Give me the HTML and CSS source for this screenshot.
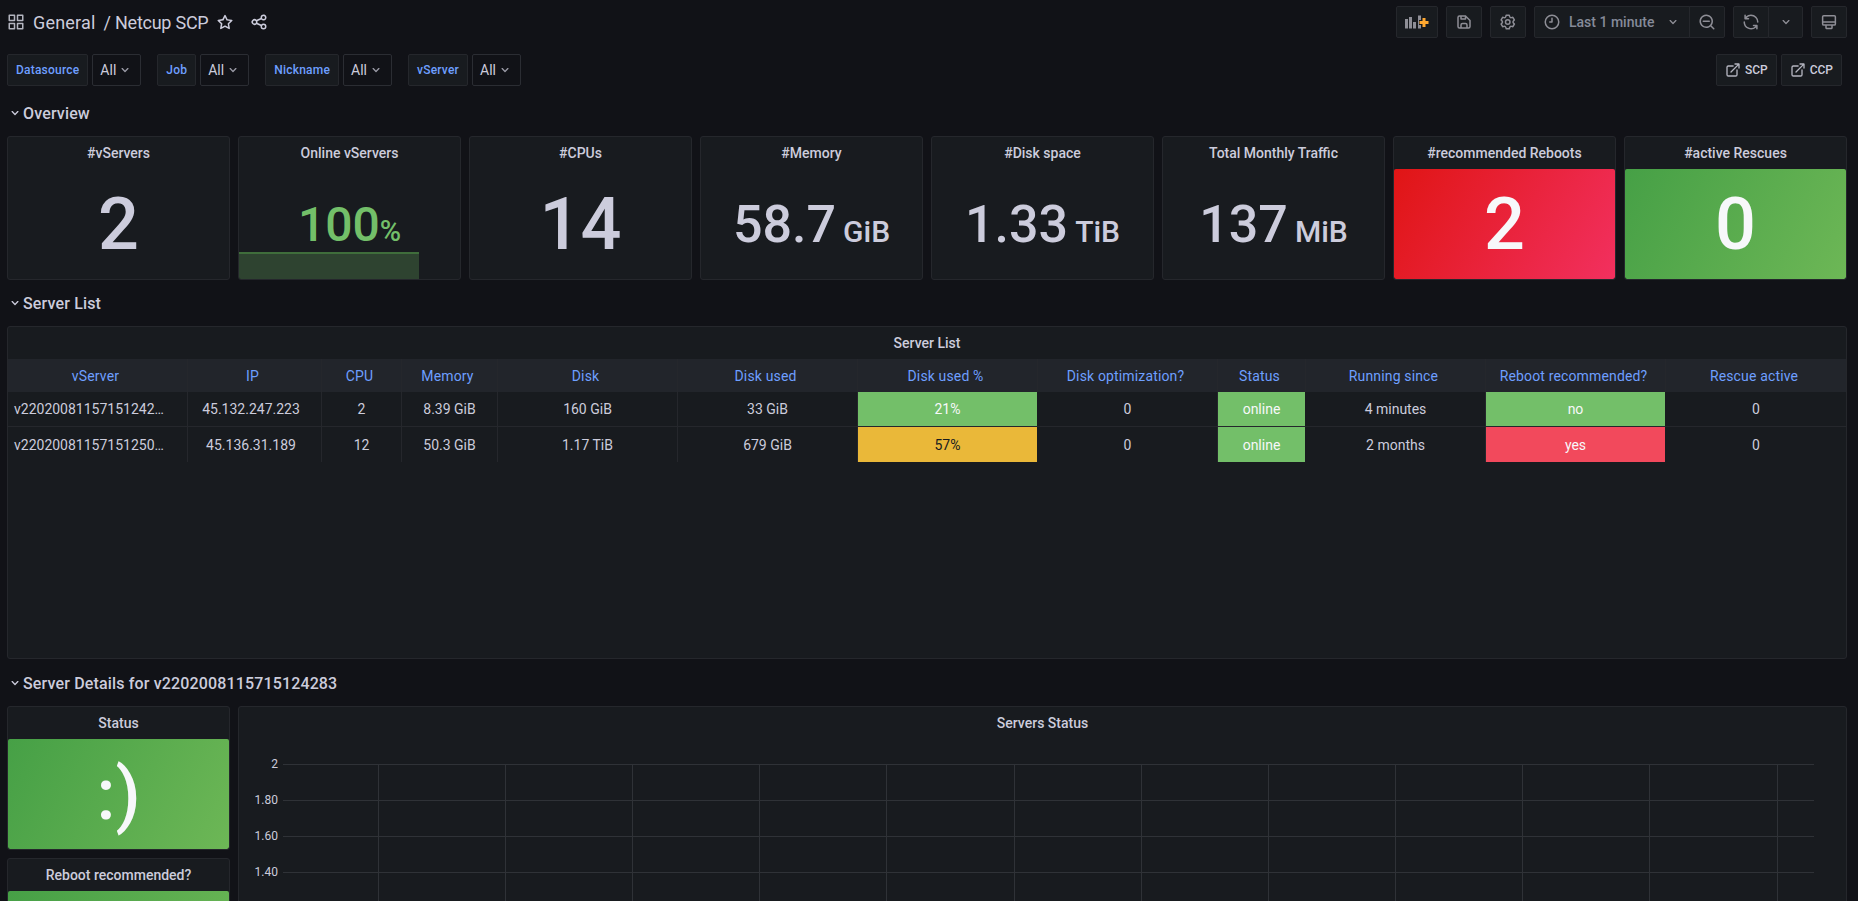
FILE: index.html
```html
<!DOCTYPE html>
<html lang="en">
<head>
<meta charset="utf-8">
<title>General / Netcup SCP</title>
<link rel="stylesheet" href="styles.css">
</head>
<body>
<svg class="defs" aria-hidden="true">
  <symbol id="i-apps" viewBox="0 0 24 24"><path d="M10,13H3a1,1,0,0,0-1,1v7a1,1,0,0,0,1,1h7a1,1,0,0,0,1-1V14A1,1,0,0,0,10,13ZM9,20H4V15H9ZM21,2H14a1,1,0,0,0-1,1v7a1,1,0,0,0,1,1h7a1,1,0,0,0,1-1V3A1,1,0,0,0,21,2ZM20,9H15V4h5Zm1,4H14a1,1,0,0,0-1,1v7a1,1,0,0,0,1,1h7a1,1,0,0,0,1-1V14A1,1,0,0,0,21,13Zm-1,7H15V15h5ZM10,2H3A1,1,0,0,0,2,3v7a1,1,0,0,0,1,1h7a1,1,0,0,0,1-1V3A1,1,0,0,0,10,2ZM9,9H4V4H9Z"/></symbol>
  <symbol id="i-star" viewBox="0 0 24 24"><path d="M22,9.67A1,1,0,0,0,21.14,9l-5.69-.83L12.9,3a1,1,0,0,0-1.8,0L8.55,8.16,2.86,9a1,1,0,0,0-.81.68,1,1,0,0,0,.25,1l4.13,4-1,5.68A1,1,0,0,0,6.9,21.44L12,18.77l5.1,2.67a.93.93,0,0,0,.46.12,1,1,0,0,0,.59-.19,1,1,0,0,0,.4-1l-1-5.68,4.13-4A1,1,0,0,0,22,9.67Zm-6.15,4a1,1,0,0,0-.29.88l.72,4.2-3.76-2a1.06,1.06,0,0,0-.94,0l-3.76,2,.72-4.2a1,1,0,0,0-.29-.88l-3-3,4.21-.61a1,1,0,0,0,.76-.55L12,5.7l1.88,3.82a1,1,0,0,0,.76.55l4.21.61Z"/></symbol>
  <symbol id="i-share" viewBox="0 0 24 24"><path d="M18,14a4,4,0,0,0-3.08,1.48l-5.1-2.35a3.64,3.64,0,0,0,0-2.26l5.1-2.35A4,4,0,1,0,14,6a4.17,4.17,0,0,0,.07.71L8.79,9.14a4,4,0,1,0,0,5.72l5.28,2.43A4.17,4.17,0,0,0,14,18a4,4,0,1,0,4-4ZM18,4a2,2,0,1,1-2,2A2,2,0,0,1,18,4ZM6,14a2,2,0,1,1,2-2A2,2,0,0,1,6,14Zm12,6a2,2,0,1,1,2-2A2,2,0,0,1,18,20Z"/></symbol>
  <symbol id="i-down" viewBox="0 0 24 24"><path d="M17,9.17a1,1,0,0,0-1.41,0L12,12.71,8.46,9.17a1,1,0,0,0-1.41,0,1,1,0,0,0,0,1.42l4.24,4.24a1,1,0,0,0,1.42,0L17,10.59A1,1,0,0,0,17,9.17Z"/></symbol>
  <symbol id="i-save" viewBox="0 0 24 24"><path d="M20.71,9.29l-6-6a1,1,0,0,0-.32-.21A1.09,1.09,0,0,0,14,3H6A3,3,0,0,0,3,6V18a3,3,0,0,0,3,3H18a3,3,0,0,0,3-3V10A1,1,0,0,0,20.71,9.29ZM9,5h4V7H9Zm6,14H9V16a1,1,0,0,1,1-1h4a1,1,0,0,1,1,1Zm4-1a1,1,0,0,1-1,1H17V16a3,3,0,0,0-3-3H10a3,3,0,0,0-3,3v3H6a1,1,0,0,1-1-1V6A1,1,0,0,1,6,5H7V8A1,1,0,0,0,8,9h6a1,1,0,0,0,1-1V6.41l4,4Z"/></symbol>
  <symbol id="i-cog" viewBox="0 0 24 24"><path d="M19.9,12.66a1,1,0,0,1,0-1.32L21.18,9.9a1,1,0,0,0,.12-1.17l-2-3.46a1,1,0,0,0-1.07-.48l-1.88.38a1,1,0,0,1-1.15-.66l-.61-1.83A1,1,0,0,0,13.64,2h-4a1,1,0,0,0-1,.68L8.08,4.51a1,1,0,0,1-1.15.66L5,4.79A1,1,0,0,0,4,5.27L2,8.73A1,1,0,0,0,2.1,9.9l1.27,1.44a1,1,0,0,1,0,1.32L2.1,14.1A1,1,0,0,0,2,15.27l2,3.46a1,1,0,0,0,1.07.48l1.88-.38a1,1,0,0,1,1.15.66l.61,1.83a1,1,0,0,0,1,.68h4a1,1,0,0,0,.95-.68l.61-1.83a1,1,0,0,1,1.15-.66l1.88.38a1,1,0,0,0,1.07-.48l2-3.46a1,1,0,0,0-.12-1.17ZM18.41,14l.8.9-1.28,2.22-1.18-.24a3,3,0,0,0-3.45,2L12.92,20H10.36L10,18.86a3,3,0,0,0-3.45-2l-1.18.24L4.07,14.89l.8-.9a3,3,0,0,0,0-4l-.8-.9L5.35,6.89l1.18.24a3,3,0,0,0,3.45-2L10.36,4h2.56l.38,1.14a3,3,0,0,0,3.45,2l1.18-.24,1.28,2.22-.8.9A3,3,0,0,0,18.41,14ZM11.64,8a4,4,0,1,0,4,4A4,4,0,0,0,11.64,8Zm0,6a2,2,0,1,1,2-2A2,2,0,0,1,11.64,14Z"/></symbol>
  <symbol id="i-clock" viewBox="0 0 24 24"><path d="M12,2A10,10,0,1,0,22,12,10,10,0,0,0,12,2Zm0,18a8,8,0,1,1,8-8A8,8,0,0,1,12,20Zm0-14a1,1,0,0,0-1,1v4H9a1,1,0,0,0,0,2h3a1,1,0,0,0,1-1V7A1,1,0,0,0,12,6Z"/></symbol>
  <symbol id="i-zoom" viewBox="0 0 24 24"><path d="M21.71,20.29,18,16.61A9,9,0,1,0,16.61,18l3.68,3.68a1,1,0,0,0,1.42,0A1,1,0,0,0,21.71,20.29ZM11,18a7,7,0,1,1,7-7A7,7,0,0,1,11,18ZM15,10H7a1,1,0,0,0,0,2h8a1,1,0,0,0,0-2Z"/></symbol>
  <symbol id="i-sync" viewBox="0 0 24 24"><path d="M19.91,15.51H15.38a1,1,0,0,0,0,2h2.4A8,8,0,0,1,4,12a1,1,0,0,0-2,0,10,10,0,0,0,16.88,7.23V21a1,1,0,0,0,2,0V16.5A1,1,0,0,0,19.91,15.51ZM12,2A10,10,0,0,0,5.12,4.77V3a1,1,0,0,0-2,0V7.5a1,1,0,0,0,1,1h4.5a1,1,0,0,0,0-2H6.22A8,8,0,0,1,20,12a1,1,0,0,0,2,0A10,10,0,0,0,12,2Z"/></symbol>
  <symbol id="i-monitor" viewBox="0 0 24 24"><path d="M5,2.500H19A2.500,2.500,0,0,1,21.500,5V14.500A2.500,2.500,0,0,1,19,17H17V20a1.500,1.500,0,0,1-1.500,1.500h-7A1.500,1.500,0,0,1,7,20V17H5a2.500,2.500,0,0,1-2.500-2.500V5A2.500,2.500,0,0,1,5,2.500ZM5,4.500a.5.5,0,0,0-.5.5v6h15V5a.5.5,0,0,0-.5-.5ZM4.500,13v1.500a.5.5,0,0,0,.5.5H19a.5.5,0,0,0,.5-.5V13ZM9,17v2.500h6V17Z"/></symbol>
  <symbol id="i-ext" viewBox="0 0 24 24"><path d="M18,10.820a1,1,0,0,0-1,1V19a1,1,0,0,1-1,1H5a1,1,0,0,1-1-1V8A1,1,0,0,1,5,7h7.180a1,1,0,0,0,0-2H5A3,3,0,0,0,2,8V19a3,3,0,0,0,3,3H16a3,3,0,0,0,3-3V11.820A1,1,0,0,0,18,10.820Zm3.920-8.200a1,1,0,0,0-.54-.54A1,1,0,0,0,21,2H15a1,1,0,0,0,0,2h3.590L8.290,14.290a1,1,0,0,0,0,1.420,1,1,0,0,0,1.420,0L20,5.410V9a1,1,0,0,0,2,0V3A1,1,0,0,0,21.920,2.620Z"/></symbol>
</svg>

<header class="topbar">
  <div class="crumbs">
    <svg class="ic ic18 crumb-icon"><use href="#i-apps"/></svg>
    <span class="crumb">General</span>
    <span class="crumb crumb-name">/ Netcup SCP</span>
    <svg class="ic ic18 star"><use href="#i-star"/></svg>
    <svg class="ic ic18 share"><use href="#i-share"/></svg>
  </div>
  <div class="tools">
    <button class="btn btn-add">
      <svg class="addpanel" viewBox="0 0 24 14"><rect x="0" y="4" width="3" height="9.500" fill="#8e8e96"/><rect x="4" y="2" width="3" height="11.500" fill="#8e8e96"/><rect x="8" y="7" width="3" height="6.500" fill="#8e8e96"/><rect x="13" y="0.500" width="3" height="13" fill="#8e8e96"/><path d="M19 2.500v10M14 7.500h10" stroke="#181b1f" stroke-width="5" fill="none"/><path d="M19 3v9M14.500 7.500h9" stroke="#ffa830" stroke-width="3" fill="none"/></svg>
    </button>
    <button class="btn btn-ico"><svg class="ic ic18"><use href="#i-save"/></svg></button>
    <button class="btn btn-ico"><svg class="ic ic18"><use href="#i-cog"/></svg></button>
    <div class="group">
      <button class="btn btn-time">
        <svg class="ic ic18"><use href="#i-clock"/></svg>
        <span class="time-label">Last 1 minute</span>
        <svg class="ic ic16 push"><use href="#i-down"/></svg>
      </button>
      <button class="btn btn-ico btn-joined"><svg class="ic ic18"><use href="#i-zoom"/></svg></button>
    </div>
    <div class="group">
      <button class="btn btn-ico"><svg class="ic ic18"><use href="#i-sync"/></svg></button>
      <button class="btn btn-caret btn-joined"><svg class="ic ic16"><use href="#i-down"/></svg></button>
    </div>
    <button class="btn btn-ico"><svg class="ic ic18"><use href="#i-monitor"/></svg></button>
  </div>
</header>

<section class="vars">
  <div class="var"><label class="var-label">Datasource</label><div class="var-value">All<svg class="ic ic16"><use href="#i-down"/></svg></div></div>
  <div class="var"><label class="var-label">Job</label><div class="var-value">All<svg class="ic ic16"><use href="#i-down"/></svg></div></div>
  <div class="var"><label class="var-label">Nickname</label><div class="var-value">All<svg class="ic ic16"><use href="#i-down"/></svg></div></div>
  <div class="var"><label class="var-label">vServer</label><div class="var-value">All<svg class="ic ic16"><use href="#i-down"/></svg></div></div>
  <div class="links">
    <a class="link"><svg class="ic ic16"><use href="#i-ext"/></svg>SCP</a>
    <a class="link"><svg class="ic ic16"><use href="#i-ext"/></svg>CCP</a>
  </div>
</section>

<h2 class="row-title row-first"><svg class="ic ic16"><use href="#i-down"/></svg>Overview</h2>
<section class="stats">
  <div class="panel"><h3 class="panel-title">#vServers</h3><div class="stat"><span class="big">2</span></div></div>
  <div class="panel"><h3 class="panel-title">Online vServers</h3>
    <div class="stat stat-online"><span class="mid green">100</span><span class="pct green">%</span><div class="spark"></div></div></div>
  <div class="panel"><h3 class="panel-title">#CPUs</h3><div class="stat"><span class="big">14</span></div></div>
  <div class="panel"><h3 class="panel-title">#Memory</h3><div class="stat"><span class="large">58.7</span><span class="unit">GiB</span></div></div>
  <div class="panel"><h3 class="panel-title">#Disk space</h3><div class="stat"><span class="large">1.33</span><span class="unit">TiB</span></div></div>
  <div class="panel"><h3 class="panel-title">Total Monthly Traffic</h3><div class="stat"><span class="large">137</span><span class="unit">MiB</span></div></div>
  <div class="panel"><h3 class="panel-title">#recommended Reboots</h3><div class="stat fill-red"><span class="big white">2</span></div></div>
  <div class="panel"><h3 class="panel-title">#active Rescues</h3><div class="stat fill-green"><span class="big white">0</span></div></div>
</section>

<h2 class="row-title"><svg class="ic ic16"><use href="#i-down"/></svg>Server List</h2>
<section class="panel table-panel">
  <h3 class="panel-title">Server List</h3>
  <div class="tr th">
    <div class="td">vServer</div><div class="td">IP</div><div class="td">CPU</div><div class="td">Memory</div><div class="td">Disk</div><div class="td">Disk used</div><div class="td">Disk used %</div><div class="td">Disk optimization?</div><div class="td">Status</div><div class="td">Running since</div><div class="td">Reboot recommended?</div><div class="td">Rescue active</div>
  </div>
  <div class="tr">
    <div class="td td-left">v22020081157151242…</div><div class="td td-ip">45.132.247.223</div><div class="td">2</div><div class="td">8.39 GiB</div><div class="td">160 GiB</div><div class="td">33 GiB</div><div class="td c-green">21%</div><div class="td">0</div><div class="td c-green">online</div><div class="td">4 minutes</div><div class="td c-green">no</div><div class="td">0</div>
  </div>
  <div class="tr tr-last">
    <div class="td td-left">v22020081157151250…</div><div class="td td-ip">45.136.31.189</div><div class="td">12</div><div class="td">50.3 GiB</div><div class="td">1.17 TiB</div><div class="td">679 GiB</div><div class="td c-amber">57%</div><div class="td">0</div><div class="td c-green">online</div><div class="td">2 months</div><div class="td c-red">yes</div><div class="td">0</div>
  </div>
</section>

<h2 class="row-title row-details"><svg class="ic ic16"><use href="#i-down"/></svg>Server Details for v2202008115715124283</h2>
<section class="details">
  <div class="details-side">
    <div class="panel"><h3 class="panel-title">Status</h3><div class="stat fill-green"><span class="smiley">:)</span></div></div>
    <div class="panel"><h3 class="panel-title">Reboot recommended?</h3><div class="stat fill-green"></div></div>
  </div>
  <div class="panel chart-panel">
    <h3 class="panel-title">Servers Status</h3>
    <svg class="chart" width="1607" height="300">
      <g class="grid">
        <path d="M44 25.500H1575M44 61.500H1575M44 97.500H1575M44 133.500H1575"/>
        <path d="M139.500 25V300M266.500 25V300M393.500 25V300M520.500 25V300M647.500 25V300M775.500 25V300M902.500 25V300M1029.500 25V300M1156.500 25V300M1283.500 25V300M1410.500 25V300M1538.500 25V300"/>
      </g>
      <g class="axis">
        <text x="39" y="29">2</text>
        <text x="39" y="65">1.80</text>
        <text x="39" y="101">1.60</text>
        <text x="39" y="137">1.40</text>
      </g>
    </svg>
  </div>
</section>
</body>
</html>
```
FILE: styles.css
```css
* { box-sizing: border-box; }
html, body { margin: 0; height: 100%; overflow: hidden; }
body {
  padding: 6px 11px 0 7px;
  background: #111217;
  color: #ccccdc;
  font-family: Roboto, "Liberation Sans", sans-serif;
  font-size: 14px;
}
.defs { display: none; }
.ic { fill: currentColor; flex: none; display: block; }
.ic18 { width: 18px; height: 18px; }
.ic16 { width: 16px; height: 16px; }

/* top bar */
.topbar { display: flex; justify-content: space-between; height: 32px; }
.crumbs { display: flex; align-items: center; font-size: 18px; }
.crumb { letter-spacing: .2px; }
.crumb-icon { margin: 0 8px 0 0; color: #b4b5c0; }
.crumb-name { margin-left: 8px; letter-spacing: -.25px; }
.star { margin-left: 8px; color: #ccccdc; }
.share { margin-left: 16px; color: #ccccdc; }
.tools { display: flex; gap: 8px; }
.group { display: flex; }
.btn {
  height: 32px;
  display: flex;
  align-items: center;
  justify-content: center;
  padding: 0;
  background: #181b1f;
  border: 1px solid #25272c;
  border-radius: 2px;
  color: #8e8e96;
  font: 500 14px Roboto, sans-serif;
}
.btn-ico { width: 36px; }
.btn-add { width: 42px; }
.addpanel { width: 24px; height: 14px; }
.btn-time { width: 156px; justify-content: flex-start; padding: 0 8px; gap: 8px; border-radius: 2px 0 0 2px; }
.time-label { color: #858a99; }
.push { margin-left: auto; }
.btn-joined { margin-left: -1px; border-radius: 0 2px 2px 0; }
.btn-caret { width: 35px; }

/* variables */
.vars { display: flex; gap: 16px; height: 32px; margin-top: 16px; }
.var { display: flex; gap: 4px; }
.var-label {
  display: flex;
  align-items: center;
  padding: 0 8px;
  background: #181b1f;
  border: 1px solid #25272c;
  border-radius: 2px;
  color: #6e9fff;
  font-size: 12px;
  font-weight: 500;
  letter-spacing: .21px;
}
.var-value {
  display: flex;
  align-items: center;
  width: 49px;
  padding-left: 7px;
  gap: 1px;
  border: 1px solid #2b2d33;
  border-radius: 2px;
  background: #111217;
}
.var-value .ic { color: #9a9aa6; }
.links { display: flex; gap: 4px; margin: 0 5px 0 auto; }
.link {
  display: flex;
  align-items: center;
  gap: 4px;
  padding: 0 8px;
  background: #181b1f;
  border: 1px solid #25272c;
  border-radius: 2px;
  font-size: 12px;
  font-weight: 500;
}
.link .ic { color: #b4b5c0; }

/* rows */
.row-title {
  display: flex;
  align-items: center;
  height: 32px;
  margin: 7px 0;
  font-size: 16px;
  font-weight: 500;
  letter-spacing: .15px;
}
.row-first { margin-top: 11px; }
.row-details { margin-top: 8px; }

/* panels */
.panel {
  background: #181b1f;
  border: 1px solid #25272c;
  border-radius: 3px;
  display: flex;
  flex-direction: column;
  overflow: hidden;
}
.panel-title {
  flex: none;
  height: 32px;
  margin: 0;
  line-height: 32px;
  text-align: center;
  font-size: 14px;
  font-weight: 500;
  color: #ccccdc;
}
.stats { display: grid; grid-template-columns: repeat(8, 1fr); gap: 8px; height: 144px; }
.stat {
  position: relative;
  flex: 1;
  display: flex;
  align-items: baseline;
  justify-content: center;
  align-content: center;
  flex-wrap: wrap;
  padding-top: 2px;
  color: #ccccdc;
  font-weight: 500;
  line-height: 1;
}
.big { font-size: 72px; }
.mid { font-size: 48px; }
.pct { font-size: 29px; }
.large { font-size: 52px; }
.unit { font-size: 30px; margin-left: 7px; }
.green { color: #73bf69; }
.white { color: #f7f8fa; }
.stat-online { z-index: 0; }
.spark {
  position: absolute;
  z-index: -1;
  left: 0;
  bottom: 0;
  width: 180px;
  height: 27px;
  background: #2e4330;
  border-top: 2px solid #3f6d3b;
}
.fill-red { background: linear-gradient(120deg, #e01515, #f2305f); border-radius: 2px; }
.fill-green { background: linear-gradient(120deg, #46a046, #6db756); border-radius: 2px; }

/* table */
.table-panel { height: 333px; }
.tr {
  display: grid;
  grid-template-columns: 180px 134px 80px 96px 180px 180px 180px 180px 88px 180px 180px 1fr;
  height: 35px;
  border-bottom: 1px solid #25272c;
}
.tr-last { border-bottom: 0; }
.th { height: 33px; background: #22252b; border-bottom: 0; color: #6e9fff; letter-spacing: .15px; }
.th .td { padding-right: 4px; }
.td {
  display: flex;
  align-items: center;
  justify-content: center;
  border-right: 1px solid #25272c;
  white-space: nowrap;
  overflow: hidden;
}
.td:last-child { border-right: 0; }
.td-left { justify-content: flex-start; padding-left: 6px; }
.td-ip { padding-right: 7px; }
.c-green { background: #73bf69; color: #f7f8fa; border-right-color: #181b1f; }
.c-amber { background: #eab839; color: #181b1f; border-right-color: #181b1f; }
.c-red { background: #f2495c; color: #f7f8fa; border-right-color: #181b1f; }

/* details */
.details { display: grid; grid-template-columns: 223px 1fr; gap: 8px; height: 400px; }
.details-side { display: flex; flex-direction: column; gap: 8px; }
.details-side .panel { height: 144px; flex: none; }
.smiley { font-size: 72px; color: #f7f8fa; }
.details-side .stat { align-items: center; }
.chart { display: block; }
.grid path { fill: none; stroke: #2f3237; stroke-width: 1; }
.axis text { fill: #ccccdc; font-size: 12px; text-anchor: end; }
```
